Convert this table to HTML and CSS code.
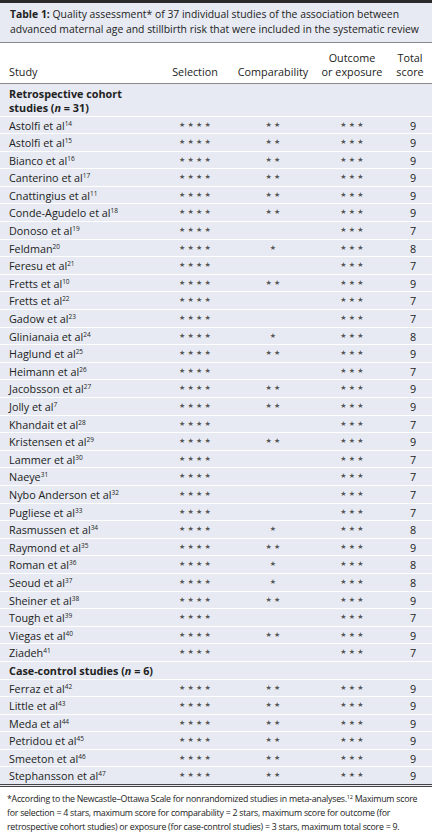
FILE: index.html
```html
<!DOCTYPE html>
<html>
<head>
<meta charset="utf-8">
<link rel="stylesheet" href="styles.css">
</head>
<body>
<div class="topbar"></div>
<div class="caption"><b>Table 1:</b> Quality assessment* of 37 individual studies of the association between advanced maternal age and stillbirth risk that were included in the systematic review</div>
<table class="tbl">
<colgroup><col class="c1"><col class="c2"><col class="c3"><col class="c4"><col class="c5"></colgroup>
<thead>
<tr><th class="l">Study</th><th>Selection</th><th>Comparability</th><th>Outcome<br>or exposure</th><th>Total<br>score</th></tr>
</thead>
<tbody id="body">
<tr class="grp first"><td class="l" colspan="5">Retrospective cohort<br>studies (<i>n</i> = 31)</td></tr>
</tbody>
</table>
<div class="foot">*According to the Newcastle–Ottawa Scale for nonrandomized studies in meta-analyses.<sup>12</sup> Maximum score for selection = 4 stars, maximum score for comparability = 2 stars, maximum score for outcome (for retrospective cohort studies) or exposure (for case-control studies) = 3 stars, maximum total score = 9.</div>
<script src="app.js"></script>
</body>
</html>
```
FILE: app.js
```js
var a = [
["Astolfi et al","14",2,9],["Astolfi et al","15",2,9],["Bianco et al","16",2,9],["Canterino et al","17",2,9],
["Cnattingius et al","11",2,9],["Conde-Agudelo et al","18",2,9],["Donoso et al","19",0,7],["Feldman","20",1,8],
["Feresu et al","21",0,7],["Fretts et al","10",2,9],["Fretts et al","22",0,7],["Gadow et al","23",0,7],
["Glinianaia et al","24",1,8],["Haglund et al","25",2,9],["Heimann et al","26",0,7],["Jacobsson et al","27",2,9],
["Jolly et al","7",2,9],["Khandait et al","28",0,7],["Kristensen et al","29",2,9],["Lammer et al","30",0,7],
["Naeye","31",0,7],["Nybo Anderson et al","32",0,7],["Pugliese et al","33",0,7],["Rasmussen et al","34",1,8],
["Raymond et al","35",2,9],["Roman et al","36",1,8],["Seoud et al","37",1,8],["Sheiner et al","38",2,9],
["Tough et al","39",0,7],["Viegas et al","40",2,9],["Ziadeh","41",0,7]
];
var b = [
["Ferraz et al","42",2,9],["Little et al","43",2,9],["Meda et al","44",2,9],["Petridou et al","45",2,9],
["Smeeton et al","46",2,9],["Stephansson et al","47",2,9]
];
function stars(n){var s=[];for(var i=0;i<n;i++)s.push("★");return s.join(" ");}
function row(r){
  return '<tr><td class="l">'+r[0]+'<sup>'+r[1]+'</sup></td><td class="s">'+stars(4)+'</td><td class="s">'+stars(r[2])+'</td><td class="s">'+stars(3)+'</td><td class="t">'+r[3]+'</td></tr>';
}
var h = '';
a.forEach(function(r){h+=row(r);});
h += '<tr class="grp"><td class="l" colspan="5">Case-control studies (<i>n</i> = 6)</td></tr>';
b.forEach(function(r){h+=row(r);});
document.getElementById('body').insertAdjacentHTML('beforeend', h);
```
FILE: styles.css
```css
html, body { margin: 0; padding: 0; background: #fff; }
body { font-family: "Open Sans", "Lato", sans-serif; font-size: 10.8px; color: #222; width: 432px; }
.topbar { height: 3px; background: #2b2b2b; }
.caption { background: #e7eaf2; padding: 3.5px 6px 5px 10px; line-height: 15px; font-size: 10.4px; border-bottom: 1px solid #8a8a8a; }
.caption b { font-weight: 700; }
.tbl { width: 432px; border-collapse: collapse; table-layout: fixed; }
.c1 { width: 160px; } .c2 { width: 70px; } .c3 { width: 86px; } .c4 { width: 72px; } .c5 { width: 44px; }
.tbl th { font-weight: 400; text-align: center; vertical-align: bottom; line-height: 14px; padding: 8px 0 4px 0; border-bottom: 1px solid #8a8a8a; }
.tbl th.l, .tbl td.l { text-align: left; padding-left: 9px; }
.tbl tbody td { background: #e7eaf2; border-top: 1px solid #fff; line-height: 13px; padding: 2px 0 1.6px 0; white-space: nowrap; }
.tbl tbody tr.first td { border-top: none; padding-top: 3px; padding-bottom: 1px; line-height: 14px; }
.tbl tbody tr:last-child td { border-bottom: 3px double #444; }
.tbl td.s { text-align: center; font-size: 7px; color: #555; font-family: "DejaVu Sans", sans-serif; }
.tbl td.t { text-align: center; padding-left: 6px; }
.grp td { font-weight: 700; }
sup { font-size: 6.5px; line-height: 0; vertical-align: 4px; }
.foot { font-size: 8.8px; letter-spacing: -0.25px; line-height: 14px; padding: 5px 4px 4px 7px; }
.foot sup { font-size: 5.5px; vertical-align: 3px; }
```
